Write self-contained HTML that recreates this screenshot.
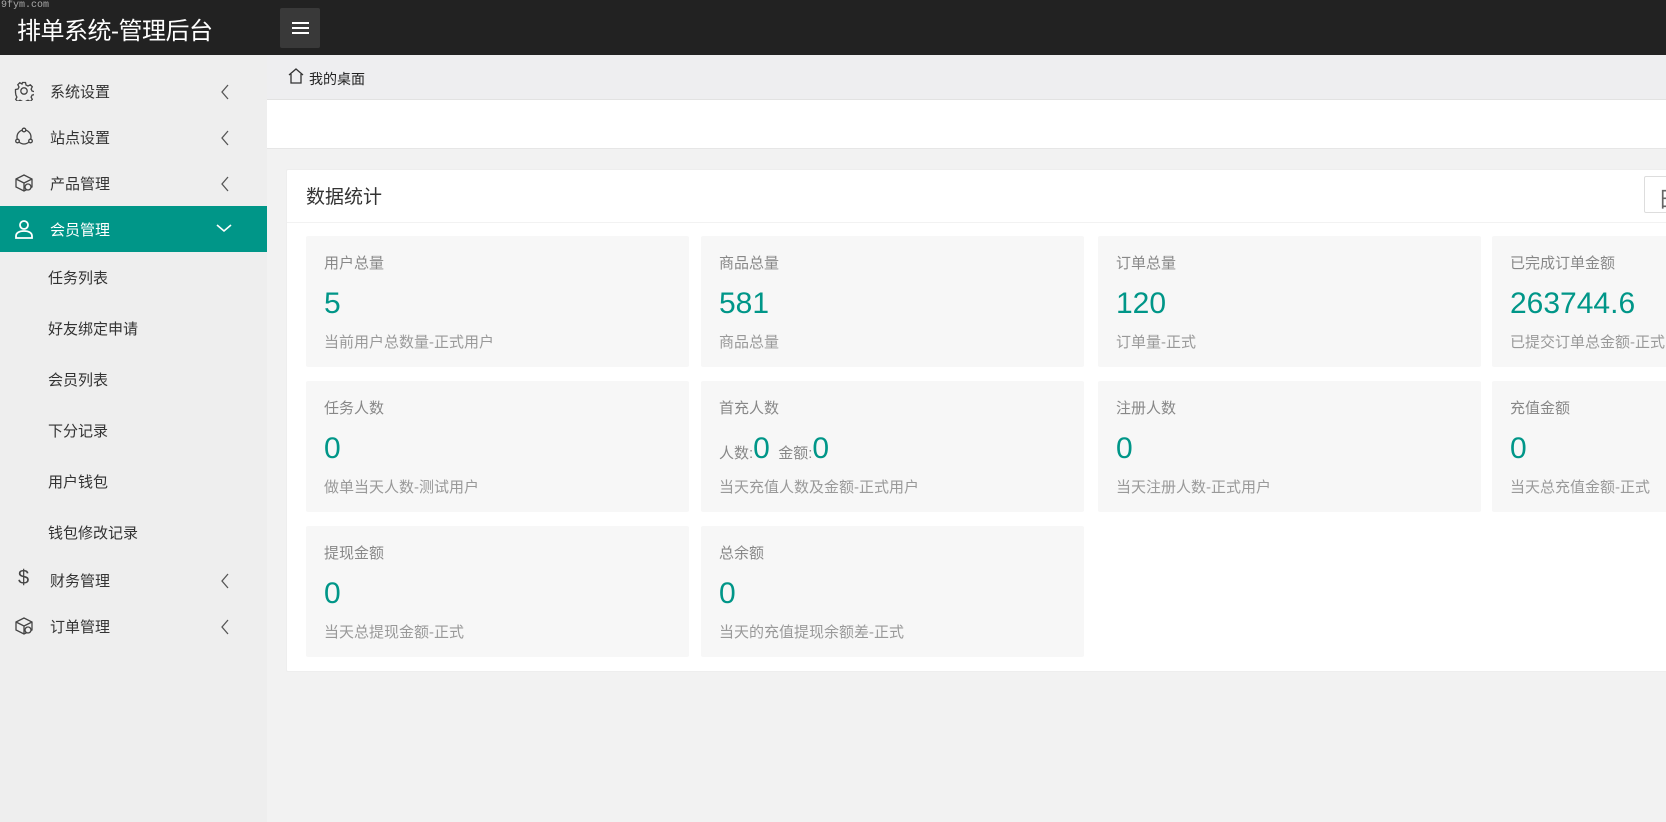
<!DOCTYPE html>
<html><head><meta charset="utf-8"><style>
*{margin:0;padding:0;box-sizing:border-box}
body{width:1666px;height:822px;overflow:hidden;background:#f2f2f2;font-family:"Liberation Sans","Noto Sans CJK SC",sans-serif;position:relative}
.hdr{position:absolute;left:0;top:0;width:1666px;height:55px;background:#222}
.logo{position:absolute;left:17px;top:11px;color:#fff;font-size:24px;letter-spacing:-0.5px}
.wm{position:absolute;left:1px;top:0;color:#aaa;font:10px "Liberation Mono",monospace}
.ham{position:absolute;left:280px;top:8px;width:40px;height:40px;background:#393939;border-radius:2px}
.ham i{position:absolute;left:12px;width:17px;height:2px;background:#fff}
.side{position:absolute;left:0;top:55px;width:267px;height:767px;background:#eee}
.mi{position:absolute;left:0;width:267px;height:46px;font-size:15px;color:#333}
.mi span{position:absolute;left:50px;top:13px}
.mi svg{position:absolute;left:14px;top:13px}
.mi svg.arr{left:220px;top:16px}
.act{background:#009688;color:#fff}
.sub{position:absolute;left:48px;font-size:15px;color:#333}
.bc{position:absolute;left:267px;top:55px;width:1399px;height:45px;background:#eeeef0;border-bottom:1px solid #e2e2e2}
.bc span{position:absolute;left:42px;top:14px;font-size:14px;color:#222}
.band{position:absolute;left:267px;top:100px;width:1399px;height:49px;background:#fff;border-bottom:1px solid #e6e6e6}
.card{position:absolute;left:286px;top:169px;width:1400px;height:503px;background:#fff;border:1px solid #eee;border-radius:2px}
.ct{position:absolute;left:19px;top:12px;font-size:19px;color:#333}
.cl{position:absolute;left:0;top:52px;width:100%;height:1px;background:#f2f2f2}
.btn{position:absolute;left:1357px;top:6px;width:60px;height:37px;border:1px solid #ddd;border-radius:2px;font-size:22px;color:#666;padding:5px 0 0 13px}
.box{position:absolute;width:383px;height:131px;background:#f7f7f7;border-radius:2px}
.box .l{position:absolute;left:18px;top:16px;font-size:15px;color:#888}
.box .n{position:absolute;left:18px;top:51px;font-size:30px;color:#009688}
.box .d{position:absolute;left:18px;top:95px;font-size:15px;color:#999}
.box .n small{font-size:15px;color:#888}
</style></head><body>
<div class="hdr"><div class="wm">9fym.com</div><div class="logo">排单系统-管理后台</div>
<div class="ham"><i style="top:14px"></i><i style="top:19px"></i><i style="top:24px"></i></div></div>
<div class="side">
<div class="mi" style="top:13px"><svg width="20" height="20" viewBox="0 0 20 20" fill="none" stroke="#444" stroke-width="1.3"><circle cx="10" cy="10" r="3.2"/><path d="M8.5 1.5h3l.5 2.5 2 1 2.3-1.2 2 2-1.2 2.3 1 2 2.5.5v3l-2.5.5-1 2 1.2 2.3-2 2-2.3-1.2-2 1-.5 2.5h-3l-.5-2.5-2-1-2.3 1.2-2-2 1.2-2.3-1-2L1.5 11.5v-3l2.5-.5 1-2L3.8 3.7l2-2L8 3z"/></svg><span>系统设置</span><svg class="arr" width="10" height="16" viewBox="0 0 10 16" fill="none" stroke="#555" stroke-width="1.3"><path d="M8 1L2 8l6 7"/></svg></div>
<div class="mi" style="top:59px"><svg width="20" height="20" viewBox="0 0 20 20" fill="none" stroke="#444" stroke-width="1.3"><circle cx="10" cy="10" r="7"/><circle cx="10" cy="3" r="1.8" fill="#eee"/><circle cx="3.5" cy="14" r="1.8" fill="#eee"/><circle cx="16.5" cy="14" r="1.8" fill="#eee"/></svg><span>站点设置</span><svg class="arr" width="10" height="16" viewBox="0 0 10 16" fill="none" stroke="#555" stroke-width="1.3"><path d="M8 1L2 8l6 7"/></svg></div>
<div class="mi" style="top:105px"><svg width="20" height="20" viewBox="0 0 20 20" fill="none" stroke="#444" stroke-width="1.3"><path d="M2 6l8-4 8 4v8l-8 4-8-4z M2 6l8 4 8-4 M10 10v8"/><circle cx="14" cy="14" r="3" fill="#eee"/></svg><span>产品管理</span><svg class="arr" width="10" height="16" viewBox="0 0 10 16" fill="none" stroke="#555" stroke-width="1.3"><path d="M8 1L2 8l6 7"/></svg></div>
<div class="mi act" style="top:151px;color:#fff"><svg width="20" height="20" viewBox="0 0 20 20" fill="none" stroke="#fff" stroke-width="1.8"><circle cx="10" cy="6" r="4"/><path d="M2 19v-2c0-3 3-5 8-5s8 2 8 5v2z"/></svg><span>会员管理</span><svg class="arr" style="left:216px;top:17px" width="16" height="10" viewBox="0 0 16 10" fill="none" stroke="#fff" stroke-width="1.6"><path d="M1 2l7 6 7-6"/></svg></div>
<div class="sub" style="top:212px">任务列表</div>
<div class="sub" style="top:263px">好友绑定申请</div>
<div class="sub" style="top:314px">会员列表</div>
<div class="sub" style="top:365px">下分记录</div>
<div class="sub" style="top:416px">用户钱包</div>
<div class="sub" style="top:467px">钱包修改记录</div>
<div class="mi" style="top:502px"><span style="left:18px;font-size:20px;top:10px;color:#444">$</span><span>财务管理</span><svg class="arr" width="10" height="16" viewBox="0 0 10 16" fill="none" stroke="#555" stroke-width="1.3"><path d="M8 1L2 8l6 7"/></svg></div>
<div class="mi" style="top:548px"><svg width="20" height="20" viewBox="0 0 20 20" fill="none" stroke="#444" stroke-width="1.3"><path d="M2 6l8-4 8 4v8l-8 4-8-4z M2 6l8 4 8-4 M10 10v8"/><circle cx="14" cy="14" r="3" fill="#eee"/></svg><span>订单管理</span><svg class="arr" width="10" height="16" viewBox="0 0 10 16" fill="none" stroke="#555" stroke-width="1.3"><path d="M8 1L2 8l6 7"/></svg></div>
</div>
<div class="bc"><svg style="position:absolute;left:20px;top:12px" width="18" height="18" viewBox="0 0 18 18" fill="none" stroke="#333" stroke-width="1.3"><path d="M2 8L9 2l7 6M4 7v9h10V7"/></svg><span>我的桌面</span></div>
<div class="band"></div>
<div class="card"><div class="ct">数据统计</div><div class="cl"></div><div class="btn">日</div>
<div class="box" style="left:19px;top:66px"><div class="l">用户总量</div><div class="n">5</div><div class="d">当前用户总数量-正式用户</div></div>
<div class="box" style="left:414px;top:66px"><div class="l">商品总量</div><div class="n">581</div><div class="d">商品总量</div></div>
<div class="box" style="left:811px;top:66px"><div class="l">订单总量</div><div class="n">120</div><div class="d">订单量-正式</div></div>
<div class="box" style="left:1205px;top:66px"><div class="l">已完成订单金额</div><div class="n">263744.6</div><div class="d">已提交订单总金额-正式</div></div>
<div class="box" style="left:19px;top:211px"><div class="l">任务人数</div><div class="n">0</div><div class="d">做单当天人数-测试用户</div></div>
<div class="box" style="left:414px;top:211px"><div class="l">首充人数</div><div class="n"><small>人数:</small>0 <small>金额:</small>0</div><div class="d">当天充值人数及金额-正式用户</div></div>
<div class="box" style="left:811px;top:211px"><div class="l">注册人数</div><div class="n">0</div><div class="d">当天注册人数-正式用户</div></div>
<div class="box" style="left:1205px;top:211px"><div class="l">充值金额</div><div class="n">0</div><div class="d">当天总充值金额-正式</div></div>
<div class="box" style="left:19px;top:356px"><div class="l">提现金额</div><div class="n">0</div><div class="d">当天总提现金额-正式</div></div>
<div class="box" style="left:414px;top:356px"><div class="l">总余额</div><div class="n">0</div><div class="d">当天的充值提现余额差-正式</div></div>
</div>
</body></html>
